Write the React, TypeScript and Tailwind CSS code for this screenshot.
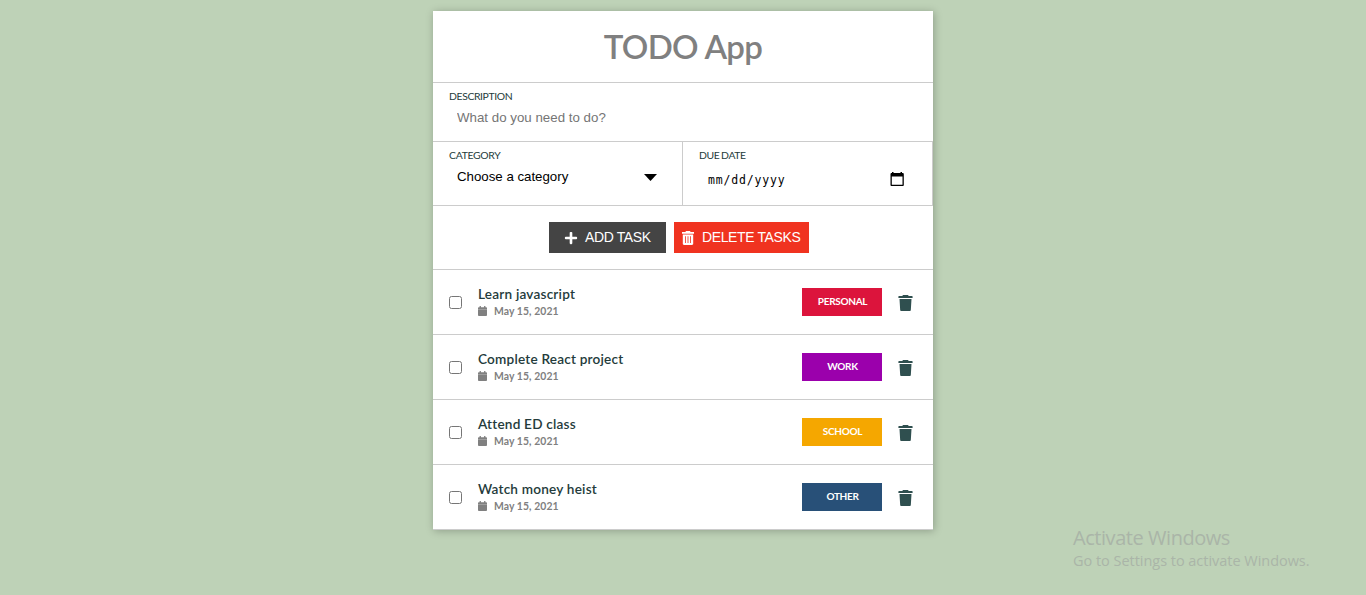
import React from "react";
import { FaPlus } from "react-icons/fa";

type Task = { title: string; date: string; category: string; color: string };

const tasks: Task[] = [
  { title: "Learn javascript", date: "May 15, 2021", category: "PERSONAL", color: "bg-[#dc143c]" },
  { title: "Complete React project", date: "May 15, 2021", category: "WORK", color: "bg-[#9b00ac]" },
  { title: "Attend ED class", date: "May 15, 2021", category: "SCHOOL", color: "bg-[#f5a700]" },
  { title: "Watch money heist", date: "May 15, 2021", category: "OTHER", color: "bg-[#285078]" },
];

function CalendarIcon() {
  return (
    <svg width="9" height="10" viewBox="0 0 9 10" fill="#808080">
      <path d="M1.600 0h1.300v1.200h3.200V0h1.300v1.200H8.200c.5 0 .8.3.8.8v.9H0V2c0-.5.3-.8.8-.8h.8zM0 3.200h9v5.900c0 .5-.3.9-.8.9H.8c-.5 0-.8-.4-.8-.9z" />
    </svg>
  );
}

function BinIcon() {
  return (
    <svg width="15" height="16" viewBox="0 0 15 16" fill="#2f4f4f">
      <path d="M5 0h5l.7.9H14c.4 0 .6.2.6.5V3H.4V1.4c0-.3.2-.5.6-.5h3.3z" />
      <path d="M1.500 4h12l-.7 11.2c0 .5-.4.8-.9.8H3.100c-.5 0-.9-.3-.9-.8z" />
    </svg>
  );
}

function SlottedBinIcon() {
  return (
    <svg width="12" height="14" viewBox="0 0 12 14" fill="#fff">
      <path d="M4 0h4l.6.9H12v1.800H0V.9h3.400z" />
      <path fillRule="evenodd" d="M.8 3.500h10.400v9.300c0 .7-.5 1.200-1.200 1.200H2c-.7 0-1.200-.5-1.200-1.200zM3 5.300v6.700h.8V5.300zm2.600 0v6.700h.8V5.300zm2.600 0v6.700H9V5.300z" />
    </svg>
  );
}

function PickerIcon() {
  return (
    <svg width="14" height="15" viewBox="0 0 14 15" fill="#000">
      <path fillRule="evenodd" d="M2 0h1.5v1h7V0H12v1h.7c.6 0 1.1.5 1.1 1.1v10.8c0 .6-.5 1.1-1.1 1.1H1.6C1 14 .5 13.500.5 12.900V2.100C.5 1.500 1 1 1.600 1H2zM1.800 4.500v8.200h10.700V4.500z" />
    </svg>
  );
}

function TaskRow({ task }: { task: Task }) {
  return (
    <li className="flex h-[65px] items-center border-b border-[#ccc] pl-4 pr-5">
      <input type="checkbox" className="mt-px size-[13px] shrink-0" />
      <div className="ml-4 flex-1 pb-px">
        <p className="h-[18px] text-[13.6px] leading-[18px] font-semibold tracking-[0.2px] text-[#243b3b]">{task.title}</p>
        <div className="flex h-4 items-center gap-[7px] text-[10.4px] leading-4 font-bold tracking-[0.08px] text-[#808080]">
          <CalendarIcon />
          <span>{task.date}</span>
        </div>
      </div>
      <span className={"flex h-7 w-20 items-center justify-center pb-px pl-px text-[10px] font-bold tracking-[-0.3px] text-white " + task.color}>
        {task.category}
      </span>
      <button className="ml-4 mt-[2px]" aria-label="Delete">
        <BinIcon />
      </button>
    </li>
  );
}

export default function App() {
  return (
    <main className="flex h-[595px] flex-col overflow-hidden bg-[#bed2b7] pt-[11px] font-['Lato',sans-serif]">
      <section className="mx-auto w-[500px] shrink-0 bg-white shadow-[1px_1px_8px_rgba(0,0,0,0.25)]">
        <h1 className="h-[72px] border-b border-[#ccc] text-center text-[33px] leading-[71px] font-semibold tracking-[-0.7px] text-[#808080]">TODO App</h1>
        <div className="h-[59px] border-b border-[#ccc] px-4 pt-[6px]">
          <label className="block h-[15px] text-[10.4px] leading-[15px] tracking-[-0.38px] text-[#243b3b]">DESCRIPTION</label>
          <input
            className="block h-[26px] w-full px-2 font-['Liberation_Sans',sans-serif] text-[13.3px] tracking-[0.01px] placeholder:text-[#757575]"
            placeholder="What do you need to do?"
          />
        </div>
        <div className="grid h-16 grid-cols-2 border-b border-[#ccc]">
          <div className="border-r border-[#ccc] px-4 pt-[6px]">
            <label className="block h-[15px] text-[10.4px] leading-[15px] tracking-[-0.3px] text-[#243b3b]">CATEGORY</label>
            <div className="flex h-[28px] items-center justify-between pl-2 pr-[9px] font-['Liberation_Sans',sans-serif] text-[13.3px] tracking-[-0.02px] text-black">
              <span>Choose a category</span>
              <svg width="13" height="7" viewBox="0 0 13 7">
                <path d="M0 0h13L6.500 7z" />
              </svg>
            </div>
          </div>
          <div className="border-r border-[#ccc] px-4 pt-[6px]">
            <label className="block h-[15px] text-[10.4px] leading-[15px] tracking-[-0.4px] [word-spacing:-0.5px] text-[#243b3b]">DUE DATE</label>
            <div className="flex h-[32px] items-center justify-between pl-[9px] pr-3 text-black">
              <span className="pt-[4px] font-['DejaVu_Sans_Mono',monospace] text-[11.5px] tracking-[0.83px]">mm/dd/yyyy</span>
              <PickerIcon />
            </div>
          </div>
        </div>
        <div className="flex h-16 justify-center gap-2 border-b border-[#ccc] pr-2 pt-4 font-['Liberation_Sans',sans-serif] text-[14px] text-white">
          <button className="flex h-[31px] w-[117px] items-center bg-[#444] pl-[15px]">
            <FaPlus className="mr-[7px] size-[14px]" />
            <span className="whitespace-nowrap tracking-[-0.38px]">ADD TASK</span>
          </button>
          <button className="flex h-[31px] w-[135px] items-center bg-[#f03320] pl-2">
            <span className="mr-2">
              <SlottedBinIcon />
            </span>
            <span className="whitespace-nowrap tracking-[-0.38px]">DELETE TASKS</span>
          </button>
        </div>
        <ul>
          {tasks.map((task) => (
            <TaskRow key={task.title} task={task} />
          ))}
        </ul>
      </section>
      <aside className="absolute left-[1073px] top-[525px] font-['Open_Sans',sans-serif] text-[#aab5a8]">
        <p className="text-[20px] leading-[26px] tracking-[-0.45px]">Activate Windows</p>
        <p className="text-[14.500px] leading-5 tracking-[-0.03px]">Go to Settings to activate Windows.</p>
      </aside>
    </main>
  );
}
